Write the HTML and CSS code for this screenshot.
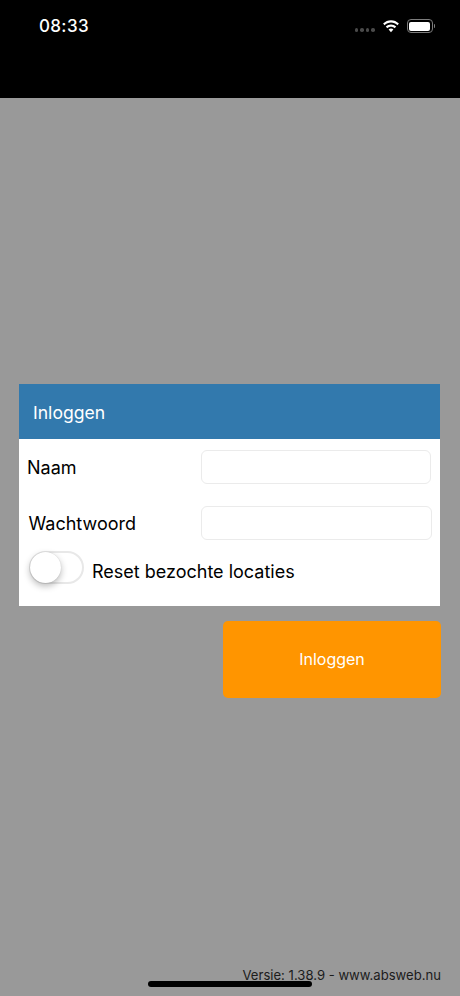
FILE: index.html
```html
<!DOCTYPE html>
<html lang="nl">
<head>
<meta charset="utf-8">
<title>Inloggen</title>
<link rel="stylesheet" href="styles.css">
</head>
<body>
<div class="screen">
  <header class="status">
    <span class="time">08:33</span>
    <div class="status-icons">
      <span class="signal"><i></i><i></i><i></i><i></i></span>
      <svg class="wifi" width="18" height="14" viewBox="0 0 18 14"><path fill="#fff" d="M9 2.6c2.4 0 4.7.9 6.4 2.6l1.5-1.6C14.7 1.4 11.9.2 9 .2S3.3 1.4 1.1 3.6l1.5 1.6C4.3 3.5 6.6 2.6 9 2.6z"/><path fill="#fff" d="M9 6.7c1.4 0 2.7.5 3.7 1.5l1.5-1.6C12.8 5.2 10.9 4.4 9 4.4s-3.8.8-5.2 2.2l1.5 1.6c1-1 2.3-1.5 3.7-1.5z"/><path fill="#fff" d="M9 8.6c-.9 0-1.8.3-2.4 1L9 12.2l2.4-2.6c-.6-.7-1.5-1-2.4-1z"/></svg>
      <span class="battery"><span class="battery-fill"></span></span>
      <span class="battery-tip"></span>
    </div>
  </header>
  <main class="content">
    <section class="panel">
      <h1 class="panel-title">Inloggen</h1>
      <div class="panel-body">
        <div class="row row-name">
          <label class="label" for="naam">Naam</label>
          <input class="field" id="naam" type="text">
        </div>
        <div class="row row-pass">
          <label class="label" for="wachtwoord">Wachtwoord</label>
          <input class="field field-wide" id="wachtwoord" type="password">
        </div>
        <div class="row-toggle">
          <span class="toggle"><span class="knob"></span></span>
          <span class="toggle-label">Reset bezochte locaties</span>
        </div>
      </div>
    </section>
    <div class="actions"><button class="login" type="button">Inloggen</button></div>
  </main>
  <footer class="version">Versie: 1.38.9 - www.absweb.nu</footer>
  <div class="home-indicator"></div>
</div>
</body>
</html>
```
FILE: styles.css
```css
* { box-sizing: border-box; }
html, body { margin: 0; padding: 0; }
body { font-family: Inter, "Liberation Sans", sans-serif; background: #999; color: #000; }
.screen { position: relative; width: 460px; height: 996px; display: flex; flex-direction: column; overflow: hidden; background: #999; }

.status { height: 98px; flex: none; background: #000; color: #fff; display: flex; justify-content: space-between; align-items: flex-start; padding: 15px 0 0 39px; }
.time { font-size: 17px; font-weight: 500; line-height: 22px; letter-spacing: .35px; }
.status-icons { display: flex; align-items: center; height: 22px; padding-right: 25px; }
.signal { display: flex; gap: 2px; margin: 8px 7px 0 0; }
.signal i { width: 3.5px; height: 3.5px; border-radius: 50%; background: #4a4a4a; }
.wifi { margin: 1px 7px 0 0; }
.battery { width: 26px; height: 14px; border: 1px solid #7c7c7c; border-radius: 4px; padding: 1.5px; display: block; }
.battery-fill { display: block; height: 100%; background: #fff; border-radius: 2px; }
.battery-tip { width: 1.5px; height: 4px; background: #7c7c7c; border-radius: 0 1px 1px 0; margin-left: 1px; }

.content { flex: 1; padding: 286px 19px 0 19px; display: flex; flex-direction: column; }
.panel { width: 421px; background: #fff; height: 222px; display: flex; flex-direction: column; }
.panel-title { margin: 0; height: 55px; background: #3279ad; color: #fff; font-size: 17.6px; font-weight: 400; line-height: 57px; padding-left: 14px; }
.panel-body { flex: 1; padding-top: 11px; display: flex; flex-direction: column; }
.row { display: flex; align-items: center; justify-content: space-between; }
.row-name { height: 34px; padding: 0 9px 0 8px; }
.row-pass { height: 34px; margin-top: 22px; padding: 0 8px 0 9.5px; }
.label { font-size: 18px; line-height: 24px; padding-top: 2px; }
.field { width: 230px; height: 34px; border: 1px solid #ebebeb; border-radius: 6px; background: #fff; padding: 0; outline: none; }
.field-wide { width: 231px; }
.row-toggle { display: flex; align-items: center; margin-top: 11px; padding-left: 10px; }
.toggle { width: 55px; height: 33px; border: 2px solid #e8e8e8; border-radius: 17px; background: #fff; display: block; position: relative; flex: none; }
.knob { position: absolute; left: -1px; top: -1px; width: 31px; height: 31px; border-radius: 50%; background: #fff; box-shadow: 0 3px 7px rgba(0,0,0,.28), 0 0 1px rgba(0,0,0,.18); }
.toggle-label { font-size: 18px; line-height: 24px; margin: 8px 0 0 8px; }

.actions { display: flex; justify-content: flex-end; margin-top: 15px; }
.login { width: 218px; height: 77px; border: 0; border-radius: 5px; background: #ff9500; color: #fff; font: 400 16px Inter, "Liberation Sans", sans-serif; padding: 0 0 2px; }

.version { position: absolute; right: 19px; bottom: 12px; font-size: 13.1px; line-height: 18px; color: #1c1c1c; }
.home-indicator { position: absolute; left: 148px; bottom: 9px; width: 164px; height: 6px; border-radius: 3px; background: #000; }
```
